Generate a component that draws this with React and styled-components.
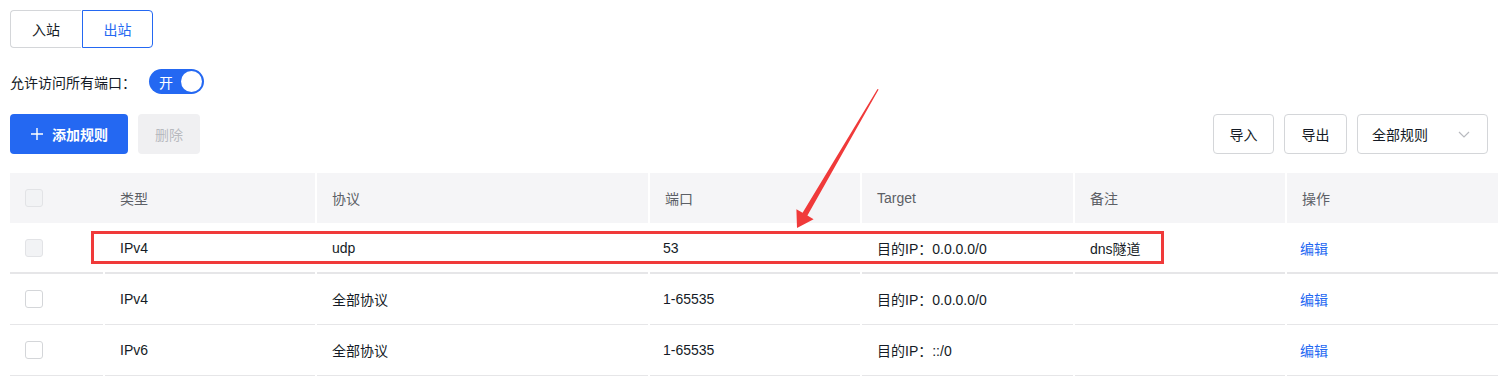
import React from "react";
import styled, { createGlobalStyle } from "styled-components";

const GlobalStyle = createGlobalStyle`
  body {
    margin: 0;
    background: #fff;
    font-family: "Liberation Sans", "Noto Sans CJK SC", sans-serif;
    color: #151b26;
    font-size: 14px;
  }
`;

const rows = [
  { type: "IPv4", proto: "udp", port: "53", target: "目的IP：0.0.0.0/0", note: "dns隧道", disabled: true },
  { type: "IPv4", proto: "全部协议", port: "1-65535", target: "目的IP：0.0.0.0/0", note: "" },
  { type: "IPv6", proto: "全部协议", port: "1-65535", target: "目的IP：::/0", note: "" },
];

function App() {
  return (
    <Page>
      <GlobalStyle />
      <Tabs>
        <Tab>入站</Tab>
        <Tab active>出站</Tab>
      </Tabs>

      <SwitchRow>
        <span>允许访问所有端口：</span>
        <Switch>
          <span>开</span>
          <Knob />
        </Switch>
      </SwitchRow>

      <Toolbar>
        <Group>
          <PrimaryButton>
            <svg width="14" height="14" viewBox="0 0 14 14">
              <path d="M7 1v12M1 7h12" stroke="#fff" strokeWidth="1.4" />
            </svg>
            添加规则
          </PrimaryButton>
          <DisabledButton>删除</DisabledButton>
        </Group>
        <Group>
          <Button w={61}>导入</Button>
          <Button w={63}>导出</Button>
          <Select>
            全部规则
            <svg width="14" height="14" viewBox="0 0 14 14">
              <path d="M2 5l5 5 5-5" stroke="#b8babf" strokeWidth="1.2" fill="none" />
            </svg>
          </Select>
        </Group>
      </Toolbar>

      <Table>
        <HeadCell first>
          <Check gray />
        </HeadCell>
        <HeadCell>类型</HeadCell>
        <HeadCell>协议</HeadCell>
        <HeadCell>端口</HeadCell>
        <HeadCell>Target</HeadCell>
        <HeadCell>备注</HeadCell>
        <HeadCell>操作</HeadCell>
        {rows.map((r, i) => (
          <React.Fragment key={i}>
            <Cell thick={i === 0}>
              <Check gray={r.disabled} />
            </Cell>
            <Cell thick={i === 0}>{r.type}</Cell>
            <Cell thick={i === 0}>{r.proto}</Cell>
            <Cell thick={i === 0} tight>{r.port}</Cell>
            <Cell thick={i === 0}>{r.target}</Cell>
            <Cell thick={i === 0}>{r.note}</Cell>
            <Cell thick={i === 0} tight>
              <Link>编辑</Link>
            </Cell>
          </React.Fragment>
        ))}
      </Table>

      {/* annotation drawn over the table */}
      <Highlight />
      <Arrow width="1498" height="390" viewBox="0 0 1498 390">
        <polygon
          points="877.5,89 878.6,89.6 807.4,215.6 813.6,219.2 797,228 796.4,209.2 802.6,212.8"
          fill="#f03a3a"
        />
      </Arrow>
    </Page>
  );
}

export default App;

const Page = styled.div`
  position: relative;
  padding: 10px 0 0 10px;
  width: 1488px;
  height: 380px;
  overflow: hidden;
`;

const Tabs = styled.div`
  display: flex;
`;

const Tab = styled.div`
  width: 71px;
  height: 38px;
  box-sizing: border-box;
  display: flex;
  align-items: center;
  justify-content: center;
  border: 1px solid ${(p) => (p.active ? "#2468f2" : "#d4d6d9")};
  color: ${(p) => (p.active ? "#2468f2" : "#151b26")};
  border-radius: ${(p) => (p.active ? "0 4px 4px 0" : "4px 0 0 4px")};
  margin-left: ${(p) => (p.active ? "1px" : "0")};
  ${(p) => !p.active && "border-right: none;"}
`;

const SwitchRow = styled.div`
  display: flex;
  align-items: center;
  margin-top: 21px;
  height: 25px;
  gap: 13px;
  color: #151b26;
`;

const Switch = styled.div`
  width: 55px;
  height: 25px;
  border-radius: 13px;
  background: #2468f2;
  display: flex;
  align-items: center;
  justify-content: space-between;
  padding: 0 2px 0 10px;
  box-sizing: border-box;
  color: #fff;
  font-size: 14px;
`;

const Knob = styled.div`
  width: 21px;
  height: 21px;
  border-radius: 50%;
  background: #fff;
`;

const Toolbar = styled.div`
  display: flex;
  justify-content: space-between;
  margin-top: 20px;
  padding-right: 10px;
`;

const Group = styled.div`
  display: flex;
  gap: 10px;
`;

const PrimaryButton = styled.div`
  width: 118px;
  height: 40px;
  border-radius: 4px;
  background: #2468f2;
  color: #fff;
  display: flex;
  align-items: center;
  justify-content: center;
  gap: 8px;
  font-weight: 600;
`;

const DisabledButton = styled.div`
  width: 62px;
  height: 40px;
  border-radius: 4px;
  background: #f0f0f2;
  color: #b8babf;
  display: flex;
  align-items: center;
  justify-content: center;
`;

const Button = styled.div`
  width: ${(p) => p.w}px;
  height: 40px;
  box-sizing: border-box;
  border: 1px solid #d4d6d9;
  border-radius: 4px;
  display: flex;
  align-items: center;
  justify-content: center;
`;

const Select = styled.div`
  width: 131px;
  height: 40px;
  box-sizing: border-box;
  border: 1px solid #d4d6d9;
  border-radius: 4px;
  display: flex;
  align-items: center;
  justify-content: space-between;
  padding: 0 16px 0 14px;
`;

const Table = styled.div`
  display: grid;
  grid-template-columns: 93px 210px 331px 210px 211px 210px 211px;
  column-gap: 2px;
  margin-top: 19px;
`;

const HeadCell = styled.div`
  height: 50px;
  background: #f5f5f7;
  color: #5c5f66;
  display: flex;
  align-items: center;
  padding-left: 15px;
  ${(p) => p.first && "box-shadow: 2px 0 0 #f5f5f7;"}
`;

const Cell = styled.div`
  height: 51px;
  box-sizing: border-box;
  border-bottom: ${(p) => (p.thick ? "2px" : "1px")} solid #e6e6e8;
  display: flex;
  align-items: center;
  padding-left: ${(p) => (p.tight ? "13px" : "15px")};
  padding-top: ${(p) => (p.thick ? "1px" : "0")};
`;

const Check = styled.div`
  width: 16px;
  height: 16px;
  border-radius: 3px;
  border: 1px solid ${(p) => (p.gray ? "#e2e3e6" : "#d4d6d9")};
  background: ${(p) => (p.gray ? "#f2f3f5" : "#fff")};
`;

const Link = styled.span`
  color: #2468f2;
`;

const Highlight = styled.div`
  position: absolute;
  left: 91px;
  top: 231px;
  width: 1073px;
  height: 33px;
  box-sizing: border-box;
  border: 3px solid #f03a3a;
  pointer-events: none;
`;

const Arrow = styled.svg`
  position: absolute;
  left: 0;
  top: 0;
  pointer-events: none;
`;
